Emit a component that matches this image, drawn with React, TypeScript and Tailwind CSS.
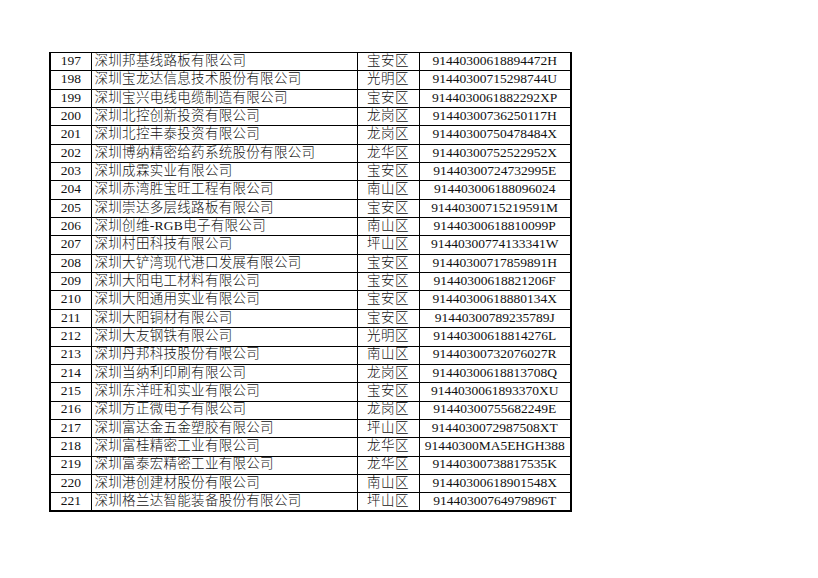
const rows: [number, string, string, string][] = [
  [197, "深圳邦基线路板有限公司", "宝安区", "91440300618894472H"],
  [198, "深圳宝龙达信息技术股份有限公司", "光明区", "91440300715298744U"],
  [199, "深圳宝兴电线电缆制造有限公司", "宝安区", "9144030061882292XP"],
  [200, "深圳北控创新投资有限公司", "龙岗区", "91440300736250117H"],
  [201, "深圳北控丰泰投资有限公司", "龙岗区", "91440300750478484X"],
  [202, "深圳博纳精密给药系统股份有限公司", "龙华区", "91440300752522952X"],
  [203, "深圳成霖实业有限公司", "宝安区", "91440300724732995E"],
  [204, "深圳赤湾胜宝旺工程有限公司", "南山区", "914403006188096024"],
  [205, "深圳崇达多层线路板有限公司", "宝安区", "91440300715219591M"],
  [206, "深圳创维-RGB电子有限公司", "南山区", "91440300618810099P"],
  [207, "深圳村田科技有限公司", "坪山区", "91440300774133341W"],
  [208, "深圳大铲湾现代港口发展有限公司", "宝安区", "91440300717859891H"],
  [209, "深圳大阳电工材料有限公司", "宝安区", "91440300618821206F"],
  [210, "深圳大阳通用实业有限公司", "宝安区", "91440300618880134X"],
  [211, "深圳大阳铜材有限公司", "宝安区", "91440300789235789J"],
  [212, "深圳大友钢铁有限公司", "光明区", "91440300618814276L"],
  [213, "深圳丹邦科技股份有限公司", "南山区", "91440300732076027R"],
  [214, "深圳当纳利印刷有限公司", "龙岗区", "91440300618813708Q"],
  [215, "深圳东洋旺和实业有限公司", "宝安区", "9144030061893370XU"],
  [216, "深圳方正微电子有限公司", "龙岗区", "91440300755682249E"],
  [217, "深圳富达金五金塑胶有限公司", "坪山区", "9144030072987508XT"],
  [218, "深圳富桂精密工业有限公司", "龙华区", "91440300MA5EHGH388"],
  [219, "深圳富泰宏精密工业有限公司", "龙华区", "91440300738817535K"],
  [220, "深圳港创建材股份有限公司", "南山区", "91440300618901548X"],
  [221, "深圳格兰达智能装备股份有限公司", "坪山区", "91440300764979896T"],
];

export default function App() {
  return (
    <div className="w-[818px] h-[578px] bg-white pt-[52px] pl-[49px] font-['Liberation_Serif','Noto_Sans_CJK_SC',serif] font-light text-[#111]">
      <table className="w-[521px] border-collapse table-fixed border-l-2 border-r-2 border-b-2 border-black text-[13.5px] leading-none">
        <colgroup>
          <col className="w-[41px]" />
          <col className="w-[266px]" />
          <col className="w-[62px]" />
          <col className="w-[152px]" />
        </colgroup>
        <tbody>
          {rows.map(([no, name, district, code]) => (
            <tr key={no} className="h-[18.35px]">
              <td className="border border-black text-center align-bottom pb-[3px] p-0">{no}</td>
              <td className="border border-black align-bottom pb-[3px] pl-[3px] tracking-[0.3px] whitespace-nowrap">{name}</td>
              <td className="border border-black text-center align-bottom pb-[3px] tracking-[0.5px]">{district}</td>
              <td className="border border-black text-center align-bottom pb-[3px] whitespace-nowrap">{code}</td>
            </tr>
          ))}
        </tbody>
      </table>
    </div>
  );
}
